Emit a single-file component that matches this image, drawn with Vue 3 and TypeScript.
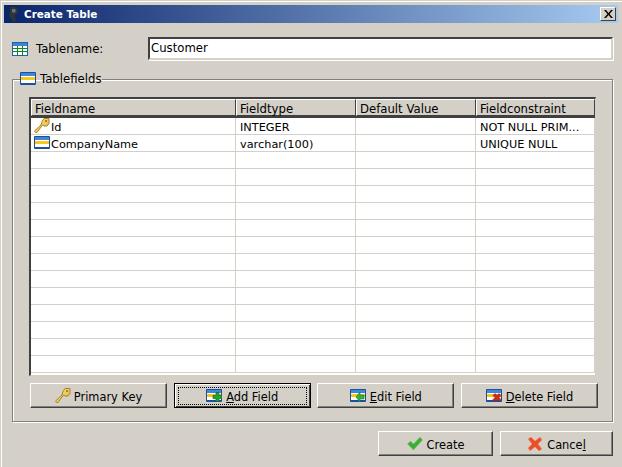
<script setup lang="ts">
interface Field { name: string; type: string; def: string; constraint: string; icon: string }
const fields: Field[] = [
  { name: 'Id', type: 'INTEGER', def: '', constraint: 'NOT NULL PRIM...', icon: 'key' },
  { name: 'CompanyName', type: 'varchar(100)', def: '', constraint: 'UNIQUE NULL', icon: 'field' },
  ...Array.from({ length: 13 }, () => ({ name: '', type: '', def: '', constraint: '', icon: '' })),
]
const headers: string[] = ['Fieldname', 'Fieldtype', 'Default Value', 'Fieldconstraint']
</script>

<template>
  <div class="window">
    <div class="titlebar">
      <svg class="appicon" width="11" height="17" viewBox="0 0 11 17"><path d="M2 1h6l2 3-1 4-2 1 1 6-3 1-2-4-2-2 1-5z" fill="#2e3438"/><path d="M4 3h3l1 2-2 2-2-1z" fill="#66747a"/></svg>
      <span class="title">Create Table</span>
      <span class="close">
        <svg width="9" height="8" viewBox="0 0 9 8"><path d="M0 0h2l2.500 3 2.500-3h2L5.500 4 9 8H7L4.500 5 2 8H0l3.500-4z" fill="#000"/></svg>
      </span>
    </div>
    <div class="body">
      <div class="namerow">
        <svg class="tableicon" width="16" height="14" viewBox="0 0 16 14">
          <rect x="0.500" y="0.500" width="15" height="13" fill="#fff" stroke="#1f5fa8"/>
          <rect x="1" y="1" width="14" height="3" fill="#3d85cf"/>
          <path d="M1 6.500h14M1 9.500h14M5.500 4v9M10.500 4v9" stroke="#0a8a1e"/>
        </svg>
        <label class="namelabel">Tablename:</label>
        <div class="nameinput">Customer</div>
      </div>

      <fieldset class="group">
        <legend class="legend">
          <svg width="16" height="14" viewBox="0 0 16 14"><use href="#fieldicon" /></svg>
          <span class="legendtext">Tablefields</span>
        </legend>
        <div class="table">
          <div class="thead">
            <div v-for="h in headers" :key="h" class="th">{{ h }}</div>
          </div>
          <div class="tbody">
            <div v-for="(f, i) in fields" :key="i" class="tr">
              <div class="td first">
                <svg v-if="f.icon === 'key'" class="rowicon" width="16" height="16" viewBox="0 0 16 16"><use href="#keyicon" /></svg>
                <svg v-else-if="f.icon === 'field'" class="rowicon" width="16" height="14" viewBox="0 0 16 14"><use href="#fieldicon" /></svg>
                <span class="cellname">{{ f.name }}</span>
              </div>
              <div class="td pad">{{ f.type }}</div>
              <div class="td pad">{{ f.def }}</div>
              <div class="td pad">{{ f.constraint }}</div>
            </div>
            <div class="tail"></div>
          </div>
        </div>
        <div class="tablebtns">
          <button class="btn keybtn">
            <svg width="16" height="16" viewBox="0 0 16 16"><use href="#keyicon" /></svg>
            <span class="lbl">Primary Key</span>
          </button>
          <button class="btn focused">
            <span class="focusring">
              <svg width="16" height="14" viewBox="0 0 16 14">
                <use href="#fieldicon" />
                <path d="M10 3.500h3v3h3v3h-3v3h-3v-3H7v-3h3z" fill="#22a52c" stroke="#0f6f1b" stroke-width=".7"/>
              </svg>
              <span class="lbl"><u>A</u>dd Field</span>
            </span>
          </button>
          <button class="btn">
            <svg width="16" height="14" viewBox="0 0 16 14">
              <use href="#fieldicon" />
              <path d="M14 6h-4V3L6 8l4 5v-3h4z" fill="#35b03a" stroke="#1f7a28" stroke-width=".6"/>
            </svg>
            <span class="lbl"><u>E</u>dit Field</span>
          </button>
          <button class="btn">
            <svg width="16" height="14" viewBox="0 0 16 14">
              <use href="#fieldicon" />
              <path d="M8 6l2-2 2 2 2-2 2 2-2 2 2 2-2 2-2-2-2 2-2-2 2-2z" transform="translate(-1 0.500)" fill="#d02a1c" stroke="#8c1a10" stroke-width=".6"/>
            </svg>
            <span class="lbl"><u>D</u>elete Field</span>
          </button>
        </div>
      </fieldset>

      <div class="actions">
        <button class="btn action create">
          <svg width="16" height="15" viewBox="0 0 16 15"><path d="M0.500 8l3-3 3 3L13 1l2.500 3-9 10z" fill="#3cae34" stroke="#7fc977" stroke-width=".6"/></svg>
          <span class="lbl">Create</span>
        </button>
        <button class="btn action cancel">
          <svg width="16" height="16" viewBox="0 0 16 16"><path d="M1 3l3-2 4 4 5-4 2 3-4 4 4 5-3 2-4-4-5 4-2-3 4-4z" fill="#e8502a" stroke="#f09a80" stroke-width=".6"/></svg>
          <span class="lbl">Cance<u>l</u></span>
        </button>
      </div>
    </div>

    <svg class="defs" width="0" height="0">
      <defs>
        <linearGradient id="gold" x1="0" y1="0" x2="1" y2="1">
          <stop offset="0" stop-color="#fff0a0"/>
          <stop offset="1" stop-color="#d8a828"/>
        </linearGradient>
        <g id="fieldicon">
          <rect x="0" y="0" width="16" height="13" rx="1" fill="#1c4f9c"/>
          <rect x="1" y="1" width="14" height="3" fill="#3d86dc"/>
          <rect x="1" y="4" width="14" height="7" fill="#fff"/>
          <rect x="1" y="5" width="14" height="3" fill="#f6c818"/>
        </g>
        <g id="keyicon">
          <path d="M10 0.500h5v5l-2 2.500h-3l-1.500-1L3 14.500H1.500l-1-1.500L7 7l1-3.500z" fill="url(#gold)" stroke="#a88420"/>
          <rect x="11" y="2" width="2" height="2" fill="#a88420"/>
        </g>
      </defs>
    </svg>
  </div>
</template>

<style>
html, body { margin: 0; background: #d4d0c8; }
</style>

<style scoped>
.window {
  width: 622px;
  height: 467px;
  box-sizing: border-box;
  background: #d4d0c8;
  border-top: 1px solid #d4d0c8;
  border-left: 1px solid #d4d0c8;
  box-shadow: inset 1px 1px 0 #fff;
  padding: 4px 4px 0 3px;
  font-family: "DejaVu Sans", sans-serif;
  font-size: 11.7px;
  color: #000;
  overflow: hidden;
  position: relative;
}
.titlebar {
  height: 18px;
  display: flex;
  align-items: center;
  background: linear-gradient(90deg, #0a246a, #a6caf0);
  padding: 0 2px 0 4px;
  gap: 5px;
}
.appicon { flex: none; }
.title { color: #fff; font-weight: bold; font-size: 10.4px; flex: 1; }
.close {
  width: 16px;
  height: 14px;
  box-sizing: border-box;
  background: #d4d0c8;
  border: 1px solid;
  border-color: #fff #404040 #404040 #fff;
  display: flex;
  align-items: center;
  justify-content: center;
}
.body {
  padding: 14px 5px 0 8px;
}
.namerow {
  display: flex;
  align-items: center;
  height: 23px;
}
.tableicon { flex: none; margin-right: 8px; }
.namelabel { width: 112px; flex: none; }
.nameinput {
  flex: 1;
  height: 23px;
  box-sizing: border-box;
  background: #fff;
  border: 2px solid;
  border-color: #404040 #d4d0c8 #d4d0c8 #404040;
  box-shadow: 1px 1px 0 #fff;
  padding-left: 1px;
  line-height: 19px;
}
.group {
  margin: 11px 0 0;
  padding: 10px 14px 0 16px;
  height: 351px;
  box-sizing: border-box;
  border: 1px solid #808080;
  box-shadow: inset 1px 1px 0 #fff, 1px 1px 0 #fff;
  min-width: 0;
}
.legend {
  display: flex;
  align-items: center;
  gap: 4px;
  padding: 0;
  margin-left: -9px;
  height: 16px;
}
.legendtext { line-height: 18px; }
.table {
  height: 279px;
  margin-right: 2px;
  box-sizing: border-box;
  border-top: 2px solid #404040;
  border-left: 2px solid #404040;
  border-right: 1px solid #d4d0c8;
  border-bottom: 1px solid #d4d0c8;
  background: #fff;
  overflow: hidden;
}
.thead {
  display: grid;
  grid-template-columns: 205px 120px 120px 119px;
  height: 17px;
  border-bottom: 2px solid #404040;
}
.th {
  box-sizing: border-box;
  height: 17px;
  background: #d4d0c8;
  border: 1px solid;
  border-color: #fff #404040 #404040 #fff;
  padding: 0 3px;
  line-height: 18px;
}
.tr {
  display: grid;
  grid-template-columns: 205px 120px 120px 119px;
  height: 17px;
}
.td {
  box-sizing: border-box;
  border-right: 1px solid #d4d0c8;
  border-bottom: 1px solid #d4d0c8;
  line-height: 19px;
  height: 17px;
  font-size: 11.3px;
  overflow: hidden;
  white-space: nowrap;
}
.first { display: flex; align-items: center; padding-left: 3px; gap: 1px; }
.first .rowicon { flex: none; }
.cellname { padding-top: 3px; }
.pad { padding-left: 4px; }
.tail { height: 2px; border-bottom: 1px solid #d4d0c8; }
.tablebtns {
  display: flex;
  justify-content: space-between;
  margin-top: 7px;
  padding-left: 1px;
}
.btn {
  width: 137px;
  height: 25px;
  padding: 0;
  box-sizing: border-box;
  background: #d4d0c8;
  border: 1px solid;
  border-color: #fff #404040 #404040 #fff;
  box-shadow: inset -1px -1px 0 #808080;
  display: flex;
  align-items: center;
  justify-content: center;
  gap: 4px;
  font: inherit;
  font-size: 11.4px;
  color: #000;
}
.lbl { padding-top: 2px; }
.keybtn { gap: 3px; }
.focused { border: 1px solid #000; box-shadow: inset 1px 1px 0 #fff, inset -1px -1px 0 #404040; }
.focusring {
  display: flex;
  align-items: center;
  justify-content: center;
  gap: 4px;
  width: 127px;
  height: 16px;
  border: 1px dotted #000;
}
.actions {
  display: flex;
  justify-content: flex-end;
  gap: 7px;
  margin-top: 9px;
}
.action { height: 25px; }
.create { width: 115px; }
.cancel { width: 113px; }
.defs { position: absolute; }
</style>
